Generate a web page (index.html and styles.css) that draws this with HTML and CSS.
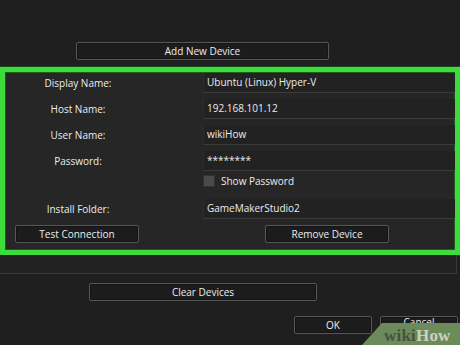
FILE: index.html
```html
<!DOCTYPE html>
<html lang="en">
<head>
  <meta charset="UTF-8" />
  <title>Remote Devices</title>
  <link rel="stylesheet" href="styles.css">
</head>
<body>
  <div class="window">
    <div class="top-row">
      <button class="btn add-button">Add New Device</button>
    </div>
    <!-- highlighted device form -->
    <div class="device-form">
      <div class="row">
        <span class="label">Display Name:</span>
        <div class="field">Ubuntu (Linux) Hyper-V</div>
      </div>
      <div class="row">
        <span class="label">Host Name:</span>
        <div class="field">192.168.101.12</div>
      </div>
      <div class="row">
        <span class="label">User Name:</span>
        <div class="field">wikiHow</div>
      </div>
      <div class="row">
        <span class="label">Password:</span>
        <div class="field">********</div>
      </div>
      <div class="row check-row">
        <span class="label"></span>
        <label class="check"><span class="box"></span>Show Password</label>
      </div>
      <div class="row folder-row">
        <span class="label">Install Folder:</span>
        <div class="field">GameMakerStudio2</div>
      </div>
      <div class="form-buttons">
        <button class="btn small-button">Test Connection</button>
        <button class="btn small-button">Remove Device</button>
      </div>
    </div>
    <div class="panel-foot"></div>
    <div class="clear-row">
      <button class="btn clear-button">Clear Devices</button>
    </div>
    <div class="dialog-buttons">
      <button class="btn dialog-button">OK</button>
      <button class="btn dialog-button cancel-button">Cancel</button>
    </div>
  </div>
  <div class="watermark">
    <svg width="98" height="22" viewBox="0 0 98 22">
      <polygon points="0,22 20,0 98,0 98,22" fill="#6d8a5a" />
    </svg>
    <span class="mark-text"><span class="wiki">wiki</span>How</span>
  </div>
</body>
</html>
```

FILE: styles.css
```css
body {
  margin: 0;
  background-color: #1f1f1f;
  font-family: 'Open Sans', 'Noto Sans', sans-serif;
  font-size: 10px;
  color: #ececec;
  width: 460px;
  height: 345px;
  overflow: hidden;
  position: relative;
}
.window {
  display: flex;
  flex-direction: column;
}
.btn {
  font-family: inherit;
  font-size: 10px;
  color: #ececec;
  background-color: #1c1c1c;
  border: 1px solid #575757;
  border-radius: 2px;
  box-shadow: inset 0 0 0 1px #141414;
  height: 18px;
  padding: 0;
  line-height: 15px;
}
.top-row {
  padding: 42px 0 0 76px;
  height: 18px;
}
.add-button {
  width: 253px;
}
.device-form {
  margin-top: 7px;
  border: 5px solid #3ddc3d;
  box-shadow: inset 0 0 0 1px #1d5f1d, 0 0 0 1px #1a4a1a;
  background-color: #262626;
  height: 177px;
  padding-top: 1px;
  display: flex;
  flex-direction: column;
  gap: 6px;
}
.row {
  display: flex;
  align-items: center;
  height: 20px;
}
.label {
  width: 146px;
  text-align: center;
}
.field {
  margin-left: 52px;
  flex: 1;
  height: 19px;
  line-height: 19px;
  padding-left: 3px;
  background-color: #222;
  border-bottom: 1px solid #3a3a3a;
  border-left: 1px solid #2c2c2c;
}
.check-row {
  height: 13px;
  margin-top: -3px;
}
.check {
  margin-left: 52px;
  display: flex;
  align-items: center;
  gap: 6px;
}
.box {
  width: 10px;
  height: 10px;
  background-color: #4a4a4a;
  border: 1px solid #333;
}
.folder-row {
  margin-top: 6px;
}
.form-buttons {
  display: flex;
  gap: 126px;
  padding-left: 10px;
}
.small-button {
  width: 124px;
}
.panel-foot {
  width: 456px;
  height: 18px;
  border-right: 1px solid #3a3a3a;
  border-bottom: 1px solid #3a3a3a;
  background-color: #222;
}
.clear-row {
  padding: 9px 0 0 89px;
}
.clear-button {
  width: 228px;
}
.dialog-buttons {
  display: flex;
  gap: 8px;
  padding: 15px 0 0 294px;
}
.dialog-button {
  width: 78px;
}
.cancel-button {
  line-height: 10px;
  vertical-align: top;
  padding-bottom: 6px;
}
.watermark {
  position: absolute;
  right: 0;
  bottom: 0;
  width: 98px;
  height: 22px;
}
.watermark svg {
  display: block;
}
.mark-text {
  position: absolute;
  left: 22px;
  top: 4px;
  font-family: 'Liberation Serif', serif;
  font-weight: bold;
  font-size: 17px;
  line-height: 17px;
  color: #c9d2c0;
  letter-spacing: 0.2px;
}
.wiki {
  color: #46523f;
}
```
